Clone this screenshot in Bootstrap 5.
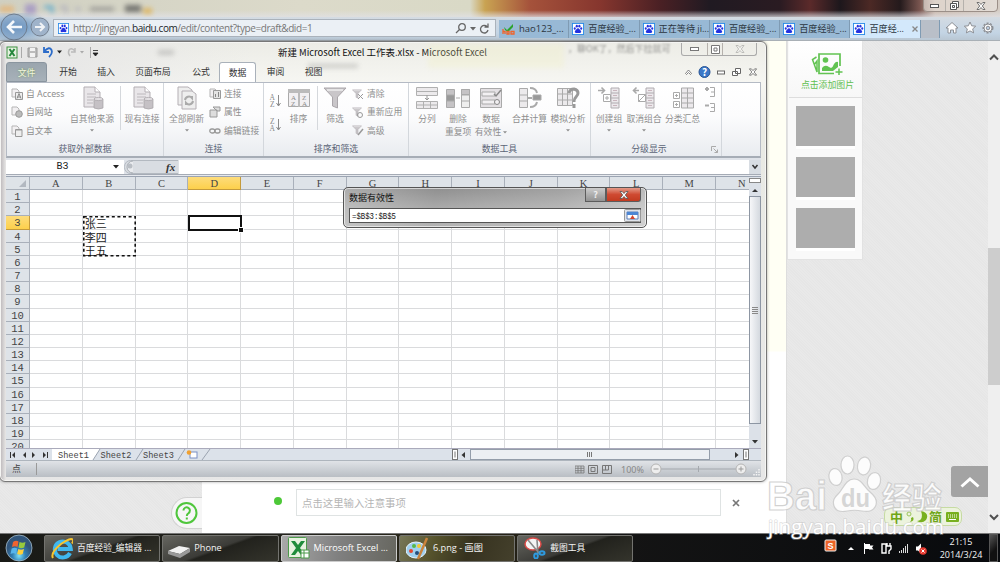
<!DOCTYPE html>
<html lang="zh-CN">
<head>
<meta charset="utf-8">
<title>Microsoft Excel</title>
<link href="https://cdn.jsdelivr.net/npm/bootstrap@5.3.0/dist/css/bootstrap.min.css" rel="stylesheet">
<style>
*{box-sizing:border-box}
body{width:1000px;height:562px;overflow:hidden;font-family:"Open Sans","Noto Sans CJK SC",sans-serif;font-size:9px;line-height:12px;color:#222;background:#e8e8e8}
svg{display:block;flex:none}
.cjk{font-family:"Noto Sans CJK SC",sans-serif}
.mono{font-family:"Liberation Mono","Noto Sans CJK SC",monospace}
.desk{width:1000px;height:562px}
/* browser */
.glass{height:17px;background:linear-gradient(180deg,transparent 60%,rgba(225,225,230,.75)),linear-gradient(90deg,#d0d0c2 0,#dcdaca 30%,#d9d9c6 47%,#c9a352 48.5%,#a5523b 53%,#86362e 60%,#4a2024 66%,#201a22 71%,#2a1b22 78%,#5b2a2a 81%,#1d171c 84%,#4c2925 87%,#241a1c 90%,#7a5650 92%,#c9b7a9 93.5%,#d5cdc5)}
.blurs{filter:blur(2.5px);left:0;top:2px;opacity:.75}
.navi{height:24px;padding-left:53px;background:linear-gradient(180deg,#d4dbe2,#c3d4e4 70%,#b9c7d3);border-bottom:1px solid #a9b0b6}
.addr{width:443px;height:18px;border:1px solid #aab2bb;background:#ebf0f5;font-size:10px;color:#777;margin-top:2px}
.btab{width:70.3px;height:18px;margin-top:3px;background:#98b9d5;border-right:1px solid #7f9bb3;font-size:9.1px;color:#2b3540;padding-left:3px;gap:4px;white-space:nowrap}
.btab.on{background:#d3e8fb}
.wctl{right:2px;top:-1px;width:75px;height:13px;border:1px solid #9b8f88;border-radius:0 0 4px 4px;background:rgba(235,230,225,.6)}
.wctl>*,.xctl>*{border-right:1px solid #b5b1ac}
.view{height:492px}
.tex{background:repeating-linear-gradient(45deg,#e6e6e6 0 1px,#e9e9e9 1px 2px)}
.paper{width:585px;background:linear-gradient(180deg,#fffff4 0 310px,#fff 311px);border-right:1px solid #ddd}
.pics{width:76px;height:219px;background:#f9f9f9;border-radius:0 4px 0 0;border:1px solid #e2e2e2;border-top:0;padding-left:1px}
.pics .add{height:57px;border-bottom:1px solid #ddd;color:#5fbf50;font-size:8.9px;background:linear-gradient(#fff,#f7f7f7)}
.shot{width:59px;height:40px;background:#adadad;margin:0 auto 11.2px;position:static;box-shadow:0 3px 0 #fff}
.sbar{width:12px;background:#efefef}
.thumb{height:137px;background:#cdcdcd}
.note{width:425px;height:27px;border:1px solid #dfe3e3;color:#b5b5b5;font-size:10.4px;padding-left:5px;margin-left:14px}
.dot{width:8px;height:8px;border-radius:50%;background:#4dc838;margin-left:72px;margin-top:-4px}
.help{width:31px;height:32px;border:1px solid #d2d2d2;border-right:0;border-radius:16px 0 0 16px;background:#f6f6f6;margin-bottom:4px}
.totop{left:951px;top:466px;width:37px;height:31px;background:#a3a3a3;border-radius:3px 0 0 3px}
/* excel */
.xl{left:-1px;top:41px;width:768px;height:441px;border:1px solid #777;border-radius:6px;padding:0 5px 0 6px;background:linear-gradient(90deg,#b9b5b8 0,#e8e7e6 6px,#e6e6e6 30px,transparent 250px),linear-gradient(#ecece6,#f6f6f2 40px,#e9eae4 90px,#e7e7e7);box-shadow:inset 0 0 0 1px #f5f5f3,0 0 3px rgba(0,0,0,.35)}
.xtitle{height:20px;font-size:9.45px;color:#111}
.xctl{right:4px;top:1px;width:76px;height:13px;border:1px solid #aaa;border-top:0;border-radius:0 0 3px 3px}
.xtabs{height:20px;font-size:8.9px;color:#333}
.xtabs>span{text-align:center;line-height:20px;height:20px;flex:none}
.file{width:41px;background:linear-gradient(#9aa5ae,#a7b1b9);color:#f2f5df;border:1px solid #8a959f;border-radius:3px 3px 0 0;text-shadow:0 0 2px #6e9a4a}
.cur{width:37px;background:#fff;border:1px solid #a9b1ba;border-bottom:0;border-radius:3px 3px 0 0}
.ribbon{height:76px;border:1px solid #b4bac4;border-bottom:2px solid #a6adb6;background:linear-gradient(#fff,#fcfcfd 45%,#e9ecf0)}
.grp{border-right:1px solid #d3d7dc;height:73px;position:relative;flex:none}
.cap{height:14px;font-size:8.9px;color:#5c6577;text-align:center;line-height:13px}
.big{font-size:8.8px;color:#8e8e8e;text-align:center;line-height:13px;padding-top:2.5px;flex:none;white-space:nowrap}
.big svg{margin:0 auto 2px}
.sm{font-size:8.8px;color:#8e8e8e;padding-top:2px;flex:none;white-space:nowrap}
.sm>div{height:18.3px;display:flex;align-items:center;gap:3px}
.vsep{width:1px;height:44px;background:#d5d8dc;margin-top:3px;flex:none}
.fbar{height:16px;background:#dfe3e9;padding-top:2px}
.fbar .box{background:#fff;font-size:11px;line-height:14px}
.sheet{height:272px;border-top:1px solid #9ba4b2;overflow:hidden;position:relative;background:#fff}
.cells{display:grid;grid-template-columns:24px repeat(14,52.78px);grid-template-rows:13px;grid-auto-rows:13.18px;width:743px;overflow:hidden;height:271px;flex:none}
.cells>div{border-right:1px solid #dadbdd;border-bottom:1px solid #dadbdd;font-size:11px;line-height:15px;padding-left:2px;color:#222;white-space:nowrap}
.cells>.hd{background:#dee3e8;border-color:#a9b0ba;text-align:center;padding:0;font-size:10.5px;line-height:14.5px;color:#444;font-family:"Liberation Serif",serif}
.cells>.rw{font-family:"Liberation Mono",monospace;font-size:10.5px;line-height:15.5px}
.cells>.hot{background:linear-gradient(#fddc7c,#fdd04b);border-color:#c49a3b}
.ants{left:76.500px;top:39px;width:53px;height:40.5px}
.pick{left:181.5px;top:38.4px;width:54.5px;height:15.2px;border:2px solid #111}
.pick i{position:absolute;right:-3px;bottom:-3px;width:4px;height:4px;background:#111;outline:1px solid #fff}
.vsb{width:12px;background:#dce1e8}
.vsb .grab{height:228px;border:1px solid #8d96a3;background:linear-gradient(90deg,#f6f7f9,#d4d9df)}
.stabs{height:12px;background:#dce2ea;border-top:1px solid #aab;font-size:9.6px;color:#444}
.stat{height:17px;border-top:1px solid #aeb5bd;background:linear-gradient(#e0e3e7,#b9bec4);color:#777;font-size:8.8px}
.dlg{left:343px;top:187px;width:304px;height:41px;border:1px solid #555;border-radius:5px;padding:0 5px;background:linear-gradient(100deg,rgba(255,255,255,.25),transparent 30%,rgba(255,255,255,.15) 70%,rgba(255,255,255,.4)),linear-gradient(#8f8f8f,#a9a9a9 50%,#b3b3b3);box-shadow:inset 0 0 0 1px rgba(255,255,255,.6)}
.dlg .ctl{border:1px solid #5c5c5c;border-top:0;height:14px;line-height:13px;text-align:center;color:#eee;font-weight:bold}
/* taskbar */
.task{height:29px;background:linear-gradient(90deg,#191a17,#23231c 30%,#2a2617 47%,#141414 62%,#080a0d);border-top:1px solid #777;color:#f3f3f3;font-size:8.75px}
.tk{width:116.3px;height:27px;margin-right:2px;border:1px solid #73736f;border-radius:2px;background:linear-gradient(160deg,#65655f,#3b3b37 48%,#22221d 52%,#34342c);padding-left:6px;gap:4px;white-space:nowrap}
.tk.on{background:linear-gradient(100deg,#a9a9a9,#808080 50%,#66665f);border-color:#ccc;color:#fff;font-size:9.2px}
.tk.pt{background:linear-gradient(110deg,#777758,#56532c 30%,#36321f 60%,#44402c);font-size:9.2px}
.ime{left:884px;top:507px;width:78px;height:19px;border:1px solid #c6dba2;border-radius:7px;background:rgba(236,244,219,.9);color:#6fa519;font-weight:bold;font-size:13px}
.wm{left:760px;top:448px}
</style>
<script src="https://cdn.jsdelivr.net/npm/bootstrap@5.3.0/dist/js/bootstrap.bundle.min.js"></script>
</head>
<body>
<svg width="0" height="0" style="position:absolute">
<defs>
<symbol id="paw" viewBox="0 0 13 13"><rect width="13" height="13" fill="#2a8be8"/><rect x="1" y="1" width="11" height="11" fill="#fff"/><g fill="#2332e0"><ellipse cx="5.2" cy="3.4" rx="1.2" ry="1.6"/><ellipse cx="8" cy="3.4" rx="1.2" ry="1.6"/><ellipse cx="3" cy="6" rx="1.1" ry="1.4"/><ellipse cx="10" cy="6" rx="1.1" ry="1.4"/><path d="M6.5 5.600C8 5.600 8.400 7.400 9.600 8.400c1 1.200 0 2.700-1.400 2.500-1-.2-2.400-.2-3.400 0-1.400.2-2.400-1.300-1.400-2.500C4.600 7.400 5 5.600 6.500 5.600z"/></g></symbol>
<symbol id="xx" viewBox="0 0 10 8"><path d="M1 .5h2.200L5 2.500 6.800.5H9L6.300 4 9 7.500H6.800L5 5.500 3.200 7.500H1L3.700 4z" fill="#fff" stroke="#555" stroke-width=".8"/></symbol>
<symbol id="doc" viewBox="0 0 24 24"><path d="M4 1h11l5 5v15H4z" fill="#e9e6e9" stroke="#b4afb4"/><path d="M15 1v5h5" fill="#fff" stroke="#b4afb4"/><path d="M7 8h9M7 11h9M7 14h6M7 17h6" stroke="#bcb8bc"/><path d="M14 13h9v9q-4.500 2-9 0z" fill="#c5c1c5" stroke="#a5a1a5" stroke-width=".7"/><ellipse cx="18.500" cy="13" rx="4.500" ry="1.600" fill="#e3e0e3" stroke="#a5a1a5" stroke-width=".7"/></symbol>
<symbol id="pg" viewBox="0 0 12 12"><path d="M1 1h5l2 2v6H1z" fill="#f2f0f2" stroke="#b5b5b5"/></symbol>
<symbol id="tri" viewBox="0 0 6 4"><path d="M0 0h6L3 3.500z" fill="currentColor"/></symbol>
<symbol id="fun" viewBox="0 0 24 24"><path d="M1 2h22l-8.500 9v11l-5-2v-9z" fill="#c9c6c9" stroke="#aaa6aa"/><path d="M4 4h16" stroke="#eee" stroke-width="1.500"/></symbol>
<symbol id="out" viewBox="0 0 24 24"><g fill="#ece9ec" stroke="#b0acb0"><path d="M14 2h8v20h-8zM14 7h8M14 12h8M14 17h8"/><path d="M16 4.500h4M16 9.500h4M16 14.500h4M16 19.500h4" stroke="#c9b5bd"/></g></symbol>
</defs>
</svg>

<div class="desk position-relative d-flex flex-column overflow-hidden">
  <div class="glass position-relative">
    <svg class="blurs position-absolute" width="170" height="14"><rect x="0" y="4" width="14" height="6" fill="#e9b06a"/><rect x="25" y="2" width="11" height="10" fill="#9d8ec4"/><path d="M44 5h8v6" stroke="#3e9fd0" stroke-width="3" fill="none"/><path d="M60 5h6v6M75 7h6" stroke="#aab" stroke-width="3" fill="none"/><path d="M90 7h24" stroke="#888" stroke-width="4"/><rect x="125" y="3" width="16" height="7" fill="#555"/><rect x="143" y="6" width="9" height="6" fill="#e0ad45"/></svg>
    <div class="wctl position-absolute d-flex">
      <span class="d-flex align-items-center justify-content-center" style="width:22px"><svg width="9" height="4"><rect x=".5" y=".5" width="8" height="3" fill="#fff" stroke="#555"/></svg></span>
      <span class="d-flex align-items-center justify-content-center" style="width:18px"><svg width="9" height="9" fill="#fff" stroke="#555"><path d="M2.500.5h6v6h-6z"/><path d="M.5 2.500h6v6h-6zM2.500 4.500h2v2h-2z"/></svg></span>
      <span class="d-flex align-items-center justify-content-center flex-fill border-0"><svg width="10" height="8"><use href="#xx"/></svg></span>
    </div>
  </div>
  <div class="navi d-flex position-relative">
    <svg class="position-absolute" style="left:0;top:-4px" width="52" height="28"><defs><radialGradient id="bl"><stop offset="0" stop-color="#4b82b9"/><stop offset="1" stop-color="#7fa3c8" stop-opacity="0"/></radialGradient></defs><ellipse cx="15" cy="14" rx="38" ry="17" fill="url(#bl)"/><circle cx="14" cy="14" r="13" fill="#7fa0c4" fill-opacity=".6" stroke="#6f7d8e"/><path d="M22 14H8m6-6-6 6 6 6" fill="none" stroke="#f5f8fb" stroke-width="2.600"/><circle cx="40" cy="14" r="9" fill="#9fb3ca" stroke="#74808f"/><path d="M35 14h9m-4-4 4 4-4 4" fill="none" stroke="#f0f3f6" stroke-width="2"/></svg>
    <div class="addr d-flex align-items-center"><svg class="ms-1 me-1" width="11" height="11"><use href="#paw"/></svg><span style="letter-spacing:-.42px;white-space:nowrap">http://jingyan.<span class="text-dark">baidu.com</span>/edit/content?type=draft&amp;did=1</span>
      <svg class="ms-auto me-1" width="36" height="13" fill="none" stroke="#666" stroke-width="1.300"><circle cx="7" cy="5" r="3.300"/><path d="M4.500 7.500 1 11"/><path d="M15 5h6l-3 3.500z" fill="#666" stroke="none"/><path d="M32 4.500A3.800 3.800 0 1 0 33 8M33 1.500V5h-3.500"/></svg></div>
    <div class="btab d-flex align-items-center" style="margin-left:3px"><svg width="13" height="12"><path d="M2 4l3 3 6-6v3L6 9 3 7z" fill="#2ba32d"/><path d="M1 6v5M1 8.500h2V11M5 8.500h2V11H5zM9 8.500h3V11H9z" stroke="#f0642a" fill="none" stroke-width="1.300"/></svg><span style="font-size:9.500px">hao123_...</span></div>
    <div class="btab d-flex align-items-center"><svg width="12" height="12"><use href="#paw"/></svg>百度经验_...</div>
    <div class="btab d-flex align-items-center"><svg width="12" height="12"><use href="#paw"/></svg>正在等待 ji...</div>
    <div class="btab d-flex align-items-center"><svg width="12" height="12"><use href="#paw"/></svg>百度经验_...</div>
    <div class="btab d-flex align-items-center"><svg width="12" height="12"><use href="#paw"/></svg>百度经验_...</div>
    <div class="btab on d-flex align-items-center"><svg width="12" height="12"><use href="#paw"/></svg>百度经...<svg class="ms-1" width="6" height="6" stroke="#888" stroke-width="1.300"><path d="M.5.5l5 5m0-5l-5 5"/></svg></div>
    <div class="btab" style="width:19px;background:#b9bfc8"></div>
    <svg class="ms-auto me-1 mt-1" width="52" height="14" fill="#fff" stroke="#8c8f95"><path d="M2 7l6-5.500L14 7h-2v5H9.500V9h-3v3H4V7z"/><path d="M26 1l1.700 3.800 4 .4-3 2.700.9 4-3.600-2-3.600 2 .9-4-3-2.700 4-.4z"/><circle cx="44" cy="7" r="4.500" stroke-dasharray="2 1.200" stroke-width="2"/><circle cx="44" cy="7" r="4"/><circle cx="44" cy="7" r="1.800" fill="#b9cbe0"/></svg>
  </div>
  <div class="view d-flex">
    <div class="tex d-flex flex-column align-items-end justify-content-end" style="width:202px"><div class="help"><svg width="30" height="30" fill="none" stroke="#4fc63c" stroke-width="2"><circle cx="14.500" cy="15" r="10"/><path d="M11.500 12.500a3.200 3.200 0 1 1 4.800 2.800q-1.500.8-1.500 2.700M14.800 19.500v2"/></svg></div></div>
    <div class="paper d-flex align-items-end"><div class="d-flex align-items-center" style="margin-bottom:17px"><span class="dot"></span><div class="note cjk d-flex align-items-center">点击这里输入注意事项</div><svg style="margin-left:11px" width="8" height="8" stroke="#777" stroke-width="1.700"><path d="M1 1l6 6m0-6L1 7"/></svg></div></div>
    <div class="tex flex-fill">
      <div class="pics"><div class="add cjk d-flex flex-column align-items-center mb-2"><svg style="margin:11px 0 3px 2px" width="32" height="24" fill="none" stroke="#62c352" stroke-width="1.500"><path d="M29 14V2H8v19.500h15" stroke-width="1.700"/><circle cx="14.500" cy="8" r="2.800" fill="#62c352" stroke="none"/><path d="M11 19v-3q3-4 7-1l2 1q2-1 3-4 2-3 4-2v5l-5 4z" fill="#62c352" stroke="none"/><path d="M5.500 5L1.500 7.500l4.500 12.500V9L3 13M28 16.500v6.500M24.500 20h7"/></svg><span class="ps-1">点击添加图片</span></div>
      <div class="shot"></div><div class="shot"></div><div class="shot"></div></div>
    </div>
    <div class="sbar d-flex flex-column align-items-center"><svg style="margin-top:12px" width="10" height="8" fill="none" stroke="#505050" stroke-width="2"><path d="M1 6.500l4-4 4 4"/></svg><div class="thumb w-100" style="margin-top:187px"></div><svg class="mt-auto" style="margin-bottom:10px" width="10" height="12" fill="none" stroke="#505050" stroke-width="2"><path d="M1 4l4 4 4-4"/></svg></div>
  </div>
  <div class="task d-flex align-items-center">
    <svg style="margin:0 11px 0 5px" width="28" height="28"><defs><radialGradient id="orb" cy=".8"><stop offset="0" stop-color="#7ee0f8"/><stop offset=".5" stop-color="#2f7fb5"/><stop offset="1" stop-color="#31557b"/></radialGradient></defs><circle cx="14" cy="14" r="13" fill="url(#orb)" stroke="#a4bccb" stroke-width=".8"/><path d="M8 8q3-2 5.500-.5L12.500 13Q10 11.500 7 13z" fill="#ee6430"/><path d="M14.500 8q3 1.500 6 0l-1.300 5.500q-3 1.300-5.700 0z" fill="#97c93d"/><path d="M6.700 14.500q3-1.500 5.500 0L11 20q-2.500-1.500-5.500 0z" fill="#57b5ec"/><path d="M13.300 15q2.700 1.300 5.700 0l-1.300 5q-2.700 1.500-5.500 0z" fill="#fdd03a"/></svg>
    <div class="tk d-flex align-items-center"><svg width="22" height="23" fill="none"><path d="M19 16a8 8 0 1 1 .8-4H6.500" stroke="#3fb8ef" stroke-width="4"/><path d="M2 21Q-1 16 10 7q10-7 12-4 .5 1-1 3.500" stroke="#f7c52f" stroke-width="2"/></svg>百度经验_编辑器 ...</div>
    <div class="tk d-flex align-items-center" style="padding-left:5px"><svg width="22" height="14" style="margin-top:5px"><path d="M0 7l11-5 11 2-10 6z" fill="#f1f1f1"/><path d="M0 7v3l12 4v-4zM12 10v4l10-6V4z" fill="#999"/></svg><span style="font-size:9.200px">Phone</span></div>
    <div class="tk on d-flex align-items-center"><svg width="22" height="22"><rect x=".5" y=".5" width="18" height="20" rx="1" fill="#e6f2df" stroke="#4c9a4a"/><path d="M3 4h4l3 4 3-4h4l-5 7 5 7h-4l-3-4-3 4H3l5-7z" fill="#1f8c3b"/><path d="M13 13h8v8h-8zM13 16h8M16 13v8" fill="#fff" stroke="#4c9a4a"/></svg>Microsoft Excel ...</div>
    <div class="tk pt d-flex align-items-center"><svg width="23" height="23"><ellipse cx="10" cy="13" rx="10" ry="8" fill="#9fd0ee" stroke="#e9f4fb"/><circle cx="5" cy="14" r="2" fill="#e5482d"/><circle cx="8" cy="9" r="2" fill="#58b945"/><circle cx="13" cy="9" r="2" fill="#f5c932"/><circle cx="11" cy="16" r="2" fill="#234f7c"/><path d="M21 1L12 22" stroke="#c9833c" stroke-width="2.500"/></svg>6.png - 画图</div>
    <div class="tk d-flex align-items-center"><svg width="22" height="22"><ellipse cx="9" cy="7" rx="8" ry="6" fill="#f4f4f4" stroke="#d94a47" stroke-width="1.500"/><path d="M4 3l11 13M13 3l1 14" stroke="#888" stroke-width="1.600"/><g fill="none" stroke="#2e9ae0" stroke-width="2"><ellipse cx="12" cy="19" rx="1.800" ry="2.500"/><ellipse cx="18" cy="16" rx="2.500" ry="1.800"/></g></svg>截图工具</div>
    <svg class="ms-auto" width="112" height="28"><rect x="3" y="6" width="11" height="11" rx="1" fill="#ee6426" stroke="#eee"/><text x="5.500" y="15" font-size="9" font-weight="bold" fill="#fff" font-family="Liberation Sans">S</text><path d="M26 16l3-3 3 3z" fill="#fff"/><path d="M42.500 9v11" stroke="#fff"/><path d="M43 10h5v1.500h3.500l-1.500 2 1.500 2H47V15h-4z" fill="#fff"/><path d="M60 10h4v9h-4zM65 9v3M68 9v3M64 12h5v3l-2 2v3" fill="none" stroke="#fff" stroke-width="1.400"/><path d="M77.500 19v-2M79.500 19v-3M81.500 19v-5M83.500 19v-7M85.500 19v-9" stroke="#ddd"/><path d="M94 12.500h2l3-3v10l-3-3h-2z" fill="#fff"/><circle cx="101" cy="17" r="3.800" fill="#e6392f"/><path d="M99.500 15.500l3 3m0-3l-3 3" stroke="#fff"/></svg>
    <div class="text-center" style="width:54px;line-height:13px;font-size:9px">21:15<br>2014/3/24</div>
    <div style="width:9px;height:28px;margin:0 2px 0 1px;border:1px solid #555;background:linear-gradient(135deg,#555,#111 60%)"></div>
  </div>

  <!-- Excel window -->
  <div class="xl position-absolute">
    <div class="xtitle position-relative d-flex align-items-center cjk">
      <svg width="96" height="16"><rect x="1" y="3" width="10" height="11" fill="#e5f1df" stroke="#3d9141"/><path d="M3.500 5l5 7m0-7l-5 7" stroke="#23863a" stroke-width="2"/><path d="M15.500 3v11" stroke="#aaa"/><path d="M22 4h9v9h-9z" fill="#bbb" stroke="#999"/><path d="M24 4h5v3h-5zM24 9h5v4h-5z" fill="#f2f2f2"/><path d="M38 3v5h5M38.500 7q5-5 7-1 1.500 3-2.500 7" fill="none" stroke="#2c6cc9" stroke-width="1.800"/><path d="M51 6.500h5l-2.500 3z" fill="#222"/><path d="M69 4v4h-4M69 7q-4-4-6-1-1.500 3 1 6" fill="none" stroke="#bbb" stroke-width="1.500"/><path d="M74 7h4l-2 2.500z" fill="#aaa"/><path d="M84.500 3v11" stroke="#aaa"/><path d="M87 6.500h5M87 9h5l-2.500 3z" fill="#222" stroke="#222" stroke-width=".8"/></svg>
      <span style="margin-left:176px;white-space:nowrap">新建 Microsoft Excel 工作表.xlsx - Microsoft Excel</span>
      <svg class="position-absolute" style="left:140px;top:0;filter:blur(2.500px);opacity:.25" width="540" height="32" fill="#555"><path d="M12 8h16v5H12zM162 22h50v4h-50zM320 9h78v4h-78z"/><rect x="282" y="2" width="136" height="24" fill="#f2f0b8"/></svg>
      <span class="position-absolute cjk" style="left:562px;top:1px;filter:blur(.9px);opacity:.55;width:108px;overflow:hidden;white-space:nowrap;font-size:9px;color:#444">，聊OK了，然后下拉就可</span>
      <div class="xctl position-absolute d-flex"><span class="d-flex align-items-center justify-content-center" style="width:26px"><svg width="9" height="4"><rect x=".5" y=".5" width="8" height="3" fill="#fff" stroke="#777"/></svg></span><span class="d-flex align-items-center justify-content-center" style="width:15px"><svg width="9" height="9" fill="#fff" stroke="#777"><path d="M.5.5h8v8h-8zM3 3h3v3H3z"/></svg></span><span class="d-flex align-items-center justify-content-center flex-fill border-0" style="opacity:.4"><svg width="10" height="8"><use href="#xx"/></svg></span></div>
    </div>
    <div class="xtabs d-flex cjk"><span class="file">文件</span><span style="width:42px">开始</span><span style="width:34px">插入</span><span style="width:60px">页面布局</span><span style="width:36px">公式</span><span class="cur">数据</span><span style="width:39px">审阅</span><span style="width:37px">视图</span>
      <svg class="ms-auto" style="margin-right:2px" width="76" height="20" fill="#fff" stroke="#666"><path d="M2.500 11.500L5.500 8l3 3.500-1 1-2-2-2 2z" stroke-width=".8"/><circle cx="21.500" cy="10" r="5.500" fill="#3c78c8" stroke="#2a5594"/><text x="19" y="13.500" font-size="10" font-weight="bold" fill="#fff" stroke="none">?</text><rect x="34.500" y="9" width="7" height="3"/><path d="M52.500 6.500h5v5h-5zM49.500 9.500h5v4h-5z"/><use href="#xx" x="65.500" y="6" width="9" height="8"/></svg></div>
    <div class="ribbon d-flex cjk">
      <div class="grp" style="width:157px"><div class="d-flex" style="height:59px">
        <div class="sm" style="width:59px;padding-left:4px"><div><svg width="12" height="12"><use href="#pg"/><path d="M4.500 4.500h7v7h-7z" fill="#eee" stroke="#999"/><path d="M6 10.500l2-5 2 5M6.500 9h3" fill="none" stroke="#888"/></svg><span style="font-family:'Noto Sans','Noto Sans CJK SC'">自 Access</span></div><div><svg width="12" height="12"><use href="#pg"/><circle cx="8" cy="8" r="3.300" fill="#bbb" stroke="#999"/></svg>自网站</div><div><svg width="12" height="12"><use href="#pg"/><path d="M4.500 4.500h6.500v7H4.500z" fill="#eee" stroke="#999"/><path d="M5 5h6" stroke="#999"/></svg>自文本</div></div>
        <div class="big" style="width:52px"><svg width="24" height="24"><use href="#doc"/></svg>自其他来源<svg class="mt-1" width="4" height="3"><use href="#tri"/></svg></div><div class="vsep" style="margin-left:2px"></div>
        <div class="big" style="width:42px"><svg width="24" height="24"><use href="#doc"/></svg>现有连接</div></div><div class="cap">获取外部数据</div></div>
      <div class="grp" style="width:100px"><div class="d-flex" style="height:59px">
        <div class="big" style="width:45px"><svg width="24" height="24"><path d="M3 1h10l4 3v15H3z" fill="#eee" stroke="#b4afb4"/><path d="M7 5h10l4 3v15H7z" fill="#eee" stroke="#b4afb4"/><path d="M10 14a4 4 0 0 1 7-2v-2M18 15a4 4 0 0 1-7 2v2" fill="none" stroke="#aaa" stroke-width="2"/></svg>全部刷新<svg class="mt-1" width="4" height="3"><use href="#tri"/></svg></div>
        <div class="sm"><div><svg width="12" height="12"><use href="#pg"/><path d="M4.500 2.500h7v8h-7z" fill="#e4e4e4" stroke="#999"/><path d="M6.500 9V6m3 3V4" stroke="#888"/></svg>连接</div><div><svg width="12" height="12"><path d="M1 4h7v7H1zM4 1h7v4H8z" fill="#ddd" stroke="#999"/></svg>属性</div><div><svg width="12" height="12" fill="none" stroke="#999" stroke-width="1.300"><rect x=".8" y="4" width="5" height="4" rx="2"/><rect x="6" y="4" width="5" height="4" rx="2"/></svg>编辑链接</div></div></div><div class="cap">连接</div></div>
      <div class="grp" style="width:145px"><div class="d-flex" style="height:59px">
        <svg width="22" height="59" fill="none" stroke="#8c8c8c"><g font-size="7.500" fill="#888" stroke="none" font-family="Liberation Serif"><text x="5.500" y="17">A</text><text x="6" y="24">Z</text><text x="6" y="41">Z</text><text x="5.500" y="48">A</text></g><path d="M14.500 12v11m-2-3 2 3 2-3M14.500 36v11m-2-3 2 3 2-3"/></svg>
        <div class="big" style="width:25px"><svg width="22" height="24"><path d="M.5 3.500h21v17H.5z" fill="#f2f0f2" stroke="#aaa"/><path d="M0 3h22v4H0zM10 3h2v18h-2z" fill="#bbb"/><g font-size="7" fill="#888" font-family="Liberation Serif"><text x="3" y="13.500">A</text><text x="3" y="20">Z</text><text x="14" y="13.500">Z</text><text x="14" y="20">A</text></g></svg>排序</div><div class="vsep" style="margin-left:6px"></div>
        <div class="big" style="width:34px"><svg width="24" height="24"><use href="#fun"/></svg>筛选</div>
        <div class="sm"><div><svg width="12" height="11"><use href="#fun" width="10" height="10"/><path d="M6 5l5 5m0-5l-5 5" stroke="#999"/></svg>清除</div><div><svg width="12" height="11"><use href="#fun" width="10" height="10"/><circle cx="8" cy="8" r="2.500" fill="none" stroke="#999"/></svg>重新应用</div><div><svg width="12" height="11"><use href="#fun" width="10" height="10"/><path d="M6 10l5-6" stroke="#999" stroke-width="1.500"/></svg>高级</div></div></div><div class="cap">排序和筛选</div></div>
      <div class="grp" style="width:182px"><div class="d-flex" style="height:59px">
        <div class="big" style="width:36px"><svg width="24" height="24" fill="#eceaec" stroke="#b0b0b0"><path d="M1.500 1.500h21v8h-21zM1.500 5.500h21M1.500 15.500h21v7h-21zM1.500 19h21M8.500 15.500v7M15.500 15.500v7"/><path d="M12 9v5m-2-2 2 2 2-2" stroke="#999"/></svg>分列</div>
        <div class="big" style="width:26px"><svg width="24" height="24" stroke="#aaa"><path d="M.5 3.500h8v18h-8z" fill="#c5c3c5"/><path d="M.5 9h8v6h-8z" fill="#999"/><path d="M15.500 3.500h8v18h-8zM15.500 9h8M15.500 15h8" fill="#eee"/><path d="M15.500 3.500h8v5h-8z" fill="#c5c3c5"/><path d="M10 12h4"/></svg>删除<br>重复项</div>
        <div class="big" style="width:40px"><svg width="24" height="24" fill="#f2f0f2" stroke="#aaa"><path d="M1.500 2.500h21v19h-21z" fill="#e4e1e4"/><path d="M3 6h13v4H3zM3 14h13v4H3z"/><path d="M15 8l2 2 5-6" stroke="#888" stroke-width="1.500" fill="none"/><circle cx="18" cy="16" r="2.500" stroke="#888"/></svg>数据<br>有效性 <svg class="d-inline m-0" width="4" height="3"><use href="#tri"/></svg></div>
        <div class="big" style="width:37px"><svg width="24" height="24" fill="#eceaec" stroke="#aaa"><path d="M1.500 2.500h8v19h-8zM1.500 9h8M1.500 15h8"/><path d="M15 9h8v5h-8z" fill="#999"/><path d="M10 12h4M12 2q6 0 7 5M19 16q-1 5-7 5" fill="none" stroke-width="2"/></svg>合并计算</div>
        <div class="big" style="width:40px"><svg width="24" height="24" fill="none" stroke="#aaa"><path d="M1.500 2.500h15v17h-15zM1.500 8h15M1.500 14h15M6.500 2v17M11.500 2v17" fill="#eceaec"/><path d="M13 7q1-4 5-4 4 1 4 4c0 4-4 3-4 9M18 18v4" stroke="#999" stroke-width="3"/></svg>模拟分析<svg class="mt-1" width="4" height="3"><use href="#tri"/></svg></div></div><div class="cap">数据工具</div></div>
      <div class="grp" style="width:131px"><div class="d-flex" style="height:59px">
        <div class="big" style="width:36px"><svg width="24" height="24" stroke="#aaa" fill="#fff"><use href="#out"/><path d="M6.500 8.500h7v7h-7zM8 12h4M10 10v4"/><path d="M1 4.500h6m-2.500-3 3 3-3 3" fill="none" stroke-width="1.600"/></svg>创建组<svg class="mt-1" width="4" height="3"><use href="#tri"/></svg></div>
        <div class="big" style="width:34px"><svg width="24" height="24" stroke="#aaa" fill="#fff"><use href="#out"/><path d="M6.500 8.500h7v7h-7zm0 7l7-7"/><path d="M7 4.500H2m2.500-3-3 3 3 3" fill="none" stroke-width="1.600"/></svg><span style="margin:0 -2px">取消组合</span><svg class="mt-1" width="4" height="3"><use href="#tri"/></svg></div>
        <div class="big" style="width:43px"><svg width="24" height="24" stroke="#aaa" fill="#ece9ec"><path d="M10.500 2h12v20h-12zM10.500 7h12M10.500 12h12M10.500 17h12M16.500 2v20"/><path d="M2.500 6.500h6v6h-6zM4 9.500h3M5.500 8v3M2.500 15.500h6v6h-6zM4 18.500h3M5.500 17v3" fill="#fff"/></svg>分类汇总</div>
        <svg width="12" height="40" fill="none" stroke="#aaa"><path d="M1 6h4M3 4v4" stroke-width="2"/><path d="M6 4.500h4.500v9H6M7 9h3"/><path d="M1 22.500h4" stroke-width="2"/><path d="M6 20.500h4.500v8H6M7 24.500h3"/></svg></div><div class="cap" style="padding-right:14px">分级显示</div><svg class="position-absolute" style="right:3px;bottom:3px" width="7" height="7" fill="none" stroke="#aaa"><path d="M.5 5V.5H5M2.500 2.500l4 4m0-3v3h-3"/></svg></div>
    </div>
    <div class="fbar d-flex"><div class="box mono d-flex" style="width:118px"><span class="m-auto" style="font-size:10px;padding-left:6px">B3</span><svg style="margin:5px 5px 0 0;color:#222" width="6" height="4"><use href="#tri"/></svg></div>
      <svg width="54" height="14"><rect x=".5" y=".5" width="60" height="13" rx="6" fill="#d9dde2" stroke="#b3b9c0"/><path d="M9 1a6 6 0 1 0 0 12" fill="#e9ebee" stroke="#a9aeb5"/><circle cx="6" cy="6" r="2.500" fill="#b9bec4"/><text x="42" y="11" font-size="11" font-style="italic" font-weight="bold" font-family="Liberation Serif" fill="#333">fx</text></svg>
      <div class="box flex-fill border-start"></div><svg width="12" height="14"><rect width="12" height="14" fill="#d8dde3"/><path d="M3.500 5l2.500 3 2.500-3" fill="none" stroke="#333" stroke-width="1.500"/></svg></div>
    <div style="height:2px;background:#e6e9ee;border-top:1px solid #a5abb5"></div>
    <div class="sheet d-flex">
      <div class="cells cjk" id="cells"></div>
      <div class="vsb d-flex flex-column"><svg width="12" height="19"><rect x=".5" y="1.500" width="11" height="4" fill="#fff" stroke="#888"/><path d="M3 15l3-3 3 3z" fill="#333"/></svg><div class="grab d-flex"><svg class="m-auto" width="6" height="7" stroke="#888"><path d="M0 .5h6M0 2.500h6M0 4.500h6M0 6.500h6"/></svg></div><svg class="mt-auto" width="12" height="12"><path d="M3 4h6L6 7.500z" fill="#333"/></svg></div>
      <svg class="ants position-absolute" fill="none" stroke="#111" stroke-width="1.600" stroke-dasharray="3 2.600"><rect x=".8" y=".8" width="51.400" height="38.900"/></svg>
      <div class="pick position-absolute"><i></i></div>
    </div>
    <div class="stabs d-flex mono"><svg width="743" height="11"><g fill="#333"><path d="M4 3h1v6H4zM9 3v6L6 6zM20 3v6l-3-3zM26 3v6l3-3zM37 3v6l3-3zM41 3h1v6h-1z"/></g><path d="M46 0v11h41l7-11z" fill="#fff"/><g fill="none" stroke="#9aa3b0"><path d="M87 11l7-11M130 11l7-11M172 11l7-11M196 11l8-11"/></g><g fill="#444" font-size="9.600"><text x="52" y="8.800" textLength="31" lengthAdjust="spacingAndGlyphs">Sheet1</text><text x="94.500" y="8.800" textLength="31" lengthAdjust="spacingAndGlyphs">Sheet2</text><text x="137" y="8.800" textLength="31" lengthAdjust="spacingAndGlyphs">Sheet3</text></g><rect x="184" y="3" width="7" height="6" fill="#fff" stroke="#7a8fc4"/><circle cx="183" cy="3.500" r="2.300" fill="#f0a030"/><rect x="446.500" y=".5" width="5" height="10" fill="#fff" stroke="#777"/><path d="M449 2.500v6" stroke="#777"/><path d="M459 3v6l-3.500-3z" fill="#333"/><rect x="464.500" y=".5" width="239" height="10" fill="#eceff3" stroke="#949daa"/><path d="M581.500 3v5M583.500 3v5M585.500 3v5" stroke="#777"/><path d="M729 3v6l3.500-3z" fill="#333"/><rect x="737.500" y=".5" width="5" height="10" fill="#fff" stroke="#777"/><path d="M740 2.500v6" stroke="#777"/></svg></div>
    <div class="stat d-flex align-items-center cjk"><span style="margin-left:6px;color:#444">点</span><span style="width:1px;height:12px;background:#999;margin-left:15px"></span><svg class="ms-auto" width="186" height="16" fill="none" stroke="#777"><path d="M-.5 2v12" stroke="#aaa"/><path d="M0 5h9v7H0zM0 7.300h9M0 9.700h9M3 5v7M6 5v7" stroke-width=".8"/><path d="M13.500 4.500h9v8h-9zM16 6.500h4v4h-4zM27.500 4.500h9v8h-9zM30.500 4v5M33.500 4v5M27.500 9h6"/><text x="46" y="12" font-size="9" fill="#888" stroke="none" textLength="23" font-family="Noto Sans">100%</text><path d="M86 8h76M123.500 5v6" stroke="#a5a9ae"/><circle cx="81" cy="8" r="5" fill="#eee" stroke="#b5b5b5"/><path d="M78.500 8h5" stroke="#999"/><circle cx="166" cy="8" r="5" fill="#eee" stroke="#b5b5b5"/><path d="M163.500 8h5M166 5.500v5" stroke="#999"/><path d="M184 8v7M181.500 10.500v5M179 13v2" stroke="#f4f4f4" stroke-width="1.500" stroke-dasharray="1.500 1"/></svg></div>
  </div>

  <!-- range picker dialog -->
  <div class="dlg position-absolute cjk">
    <div class="d-flex" style="height:20px"><span style="line-height:20px;color:#111">数据有效性</span><div class="ctl ms-auto" style="width:21px;background:linear-gradient(#ccc,#929292)">?</div><div class="ctl d-flex" style="width:35px;background:linear-gradient(#e49a88,#cf4a32 50%,#c23a20);border-radius:0 0 3px 0"><svg class="m-auto" width="10" height="8"><use href="#xx"/></svg></div></div>
    <div class="d-flex bg-white" style="height:15px;border:1px solid #555"><svg width="274" height="13"><text x="2" y="9.500" class="mono" font-size="9" textLength="44" lengthAdjust="spacingAndGlyphs" fill="#111">=$B$3:$B$5</text></svg><svg class="ms-auto" width="17" height="13"><rect x=".5" y=".5" width="16" height="12" rx="1" fill="#dfe3ea" stroke="#999"/><path d="M3 3h11v7H3z" fill="#fff" stroke="#5d7fb8"/><path d="M3 3h11v3H3z" fill="#4d86d4"/><path d="M8.500 6l2.500 4H6z" fill="#d2442d"/></svg></div>
  </div>

  <div class="totop position-absolute d-flex"><svg class="m-auto" width="20" height="12" fill="none" stroke="#fff" stroke-width="3"><path d="M1.500 10.500L10 3l8.500 7.500"/></svg></div>
  <div class="ime position-absolute d-flex align-items-center cjk" style="padding-left:5px"><span>中</span><svg width="26" height="14" fill="#78b01f"><circle cx="6" cy="4" r="2" fill="none" stroke="#9bc45b"/><path d="M10 7q2 4-3 5 2-2 1-4z"/><path d="M18 1q9 2 5 9-4 4-9 1 7-1 4-10z"/></svg><span>简</span><svg class="ms-1" width="13" height="10"><rect width="13" height="10" rx="1" fill="#78b01f"/><path d="M2 3h9M2 5h9" stroke="#fff" stroke-dasharray="1 1"/><path d="M3 7.500h7" stroke="#fff"/></svg></div>
  <svg class="wm position-absolute" width="200" height="96" fill="#fff" fill-opacity=".85" stroke="#c4c4c4" stroke-opacity=".75" stroke-width="1.200"><text x="7" y="62" font-family="Liberation Sans" font-weight="bold" font-size="41" textLength="60" lengthAdjust="spacingAndGlyphs">Bai</text><ellipse cx="87.500" cy="17" rx="6.500" ry="9"/><ellipse cx="104" cy="18" rx="6.500" ry="9" transform="rotate(10 104 18)"/><ellipse cx="75.500" cy="29" rx="6.500" ry="8.500" transform="rotate(-12 75.500 29)"/><ellipse cx="114" cy="33" rx="6.500" ry="8.500" transform="rotate(14 114 33)"/><path d="M94 31c8 0 10 8 16 13s8 10 5 15-8 5-13 4-10-1-15 0-11 1-13-5 1-9 5-13 7-14 15-14z"/><text x="81" y="59" font-family="Liberation Sans" font-weight="bold" font-size="25" textLength="29" lengthAdjust="spacingAndGlyphs" fill="#cfcfcf" stroke="none">du</text><text x="122" y="60" font-family="Noto Sans CJK SC" font-weight="bold" font-size="30">经验</text><text x="8" y="86" font-family="Open Sans" font-size="20.500" textLength="176" stroke-width="1.600" paint-order="stroke" fill-opacity="1" stroke-opacity=".5">jingyan.baidu.com</text></svg>
</div>
<script>
const data={3:'张三',4:'李四',5:'王五'};
let html='<div class="hd"><svg width="22" height="11"><path d="M20 3v7h-7z" fill="#b2b8c0"/></svg></div>';
for(const c of 'ABCDEFGHIJKLMN')html+=`<div class="hd ${c==='D'?'hot':''}">${c}</div>`;
for(let r=1;r<=20;r++){
  html+=`<div class="hd rw ${r===3?'hot':''}">${r}</div>`;
  for(let c=0;c<14;c++)html+=`<div>${c===1&&data[r]||''}</div>`;
}
document.getElementById('cells').innerHTML=html;
</script>
</body>
</html>
